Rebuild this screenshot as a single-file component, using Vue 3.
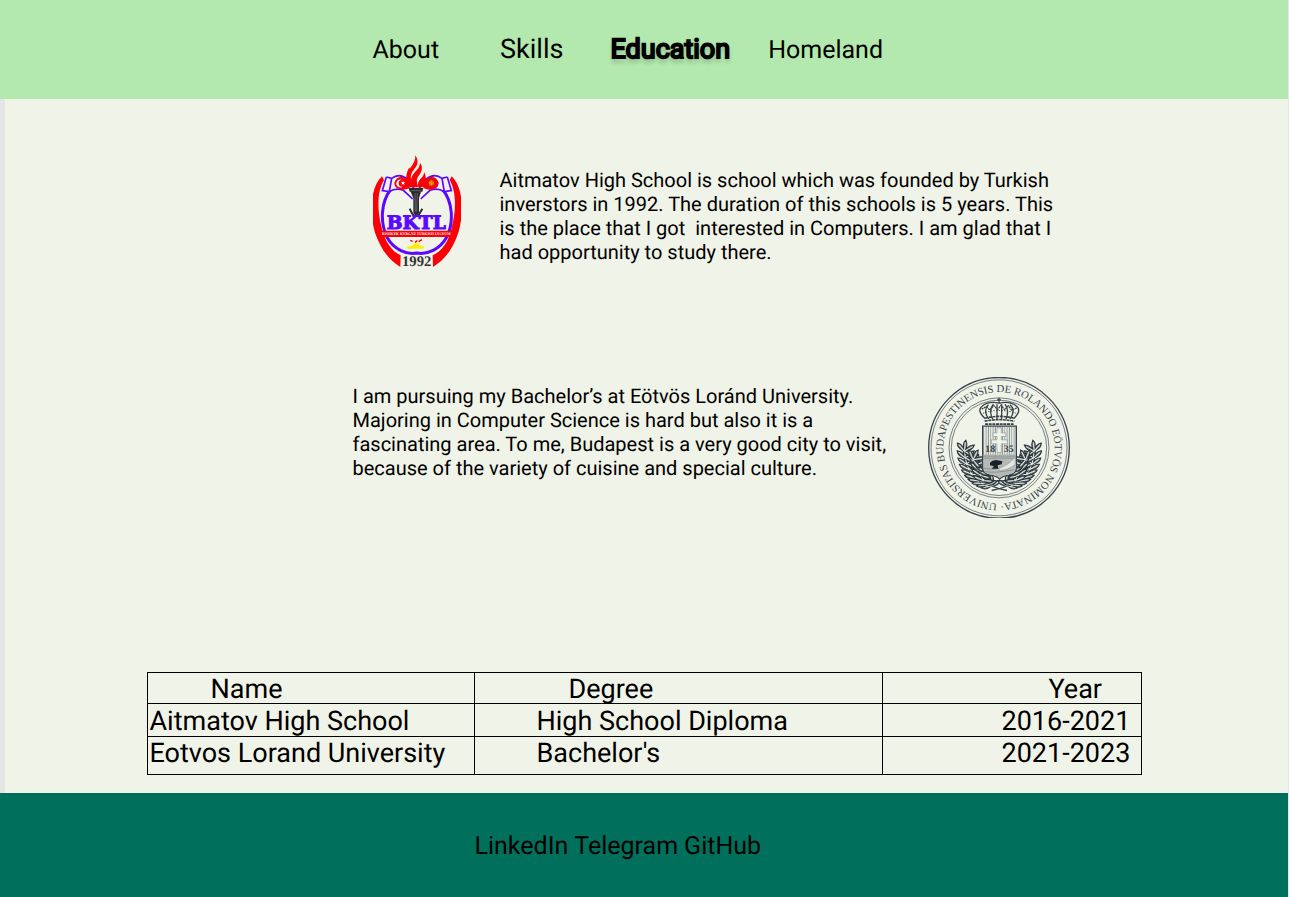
<script setup>
const sections = [
  { name: 'About', cls: 'about' },
  { name: 'Skills', cls: 'skills' },
  { name: 'Education', cls: 'education' },
  { name: 'Homeland', cls: 'homeland' },
]
const contacts = ['LinkedIn', 'Telegram', 'GitHub']
const leaves = []
for (let i = 0; i < 10; i++) {
  const t = i / 9
  leaves.push({ x: 216 - 82 * Math.sin(t * 1.5), y: 346 - 92 * t * t - 12 * t, a: 5 + t * 60 })
}
for (let i = 0; i < 5; i++) {
  const t = i / 4
  leaves.push({ x: 190 - 30 * t, y: 330 - 62 * t, a: 40 + t * 45 })
}
</script>

<template>
  <div class="page">
    <header class="top">
      <nav class="column nav" aria-label="Main">
        <a v-for="s in sections" :key="s.name" href="#" :class="s.cls">{{ s.name }}</a>
      </nav>
    </header>

    <main class="content">
      <section class="column school">
        <svg class="crest" viewBox="24 14 264 339" role="img" aria-label="BKTL 1992">
          <path d="M51 78C15 112 13 190 30 247C46 291 66 325 106 350L107 315C80 303 58 270 50 232C36 178 36 124 57 89Z" fill="#fb0007" />
          <path d="M260 78C296 112 297 190 280 247C265 291 244 325 204 350L203 315C231 303 253 270 260 232C274 178 274 124 254 89Z" fill="#fb0007" />
          <path d="M78 116C47 155 45 216 66 261C87 299 126 314 155 308C187 314 225 297 245 261C267 216 264 155 232 116" fill="none" stroke="#5a08ff" stroke-width="9" />
          <path d="M64 80L80 84Q103 66 128 87L147 115M64 80L52 121L73 124Q93 111 115 120L143 146M80 84L73 124M247 80L231 84Q208 66 182 87L162 115M247 80L259 121L238 124Q217 111 195 120L167 146M231 84L238 124" fill="#f4efff" stroke="#5a08ff" stroke-width="5" />
          <path d="M88 97Q94 78 112 80Q128 83 137 103L133 114Q113 122 98 114Q88 109 88 97ZM221 97Q215 78 197 80Q181 83 172 103L176 114Q196 122 211 114Q221 109 221 97Z" fill="#fb0007" />
          <path d="M110 88A12 12 0 1 0 113 109A10 10 0 1 1 110 88Z" fill="#fff" />
          <path d="M114 92L116 96L121 96L117 99L119 104L114 101L110 103L111 98L108 95L113 95Z" fill="#fff" />
          <circle cx="199" cy="98" r="10" fill="#ff5a08" stroke="#9b3a00" stroke-width="3" />
          <path d="M192 98H206M199 91V105" stroke="#ffb000" stroke-width="2" />
          <path d="M151 15C165 36 154 49 146 59C134 74 135 88 146 102L140 111H134Q119 91 125 71C131 53 152 42 151 15ZM166 38C176 55 168 67 160 78Q151 91 160 111H144C131 87 142 74 152 63Q163 53 166 38ZM132 52Q143 64 133 76Q126 90 136 104L139 111H133Q126 105 127 89Q121 71 132 52ZM178 66Q185 82 181 94Q179 104 172 111H160Q155 99 166 86Q177 77 178 66Z" fill="#fb0007" />
          <path d="M131 113H175L172 124H168L162 143V187L153 200L145 187V143L137 124H134Z" fill="#292b2d" />
          <path d="M139 121H168M150 128L151 184M157 128L155 184" stroke="#7f8184" stroke-width="2" />
          <path d="M134 175Q140 189 149 200M172 175Q164 189 157 200" fill="none" stroke="#292b2d" stroke-width="6" />
          <text x="154" y="237" class="crest-name">BKTL</text>
          <path d="M45 241H262L256 260H51Z" fill="#fb0007" />
          <text x="154" y="254" class="crest-line">BISHKEK KYRGYZ TURKISH LYCEUM</text>
          <path d="M125 291L145 284L152 276L158 280L166 278L161 287L179 287L174 295H148L130 297Z" fill="#fff000" />
          <path d="M136 270L143 273M150 276L157 271M161 274L171 268" fill="none" stroke="#fb0007" stroke-width="4" />
          <text x="155" y="347" class="crest-year">1992</text>
        </svg>
        <p>Aitmatov High School is school which was founded by Turkish inverstors in 1992. The duration of this schools is 5 years. This is the place that I got&nbsp; interested in Computers. I am glad that I had opportunity to study there.</p>
      </section>

      <section class="column university">
        <p>I am pursuing my Bachelor’s at Eötvös Loránd University. Majoring in Computer Science is hard but also it is a fascinating area. To me, Budapest is a very good city to visit, because of the variety of cuisine and special culture.</p>
        <svg class="seal" viewBox="25 20 426 422" role="img" aria-label="Eötvös Loránd University seal">
          <defs>
            <path id="seal-ring" d="M238 399A167 167 0 0 1 238 65A167 167 0 0 1 238 399" />
            <pattern id="seal-lines" width="7" height="7" patternUnits="userSpaceOnUse">
              <path d="M3 0V7" stroke="#667078" stroke-width="2" />
            </pattern>
          </defs>
          <g fill="none" stroke="#38434a">
            <circle cx="238" cy="232" r="211" stroke-width="4" />
            <circle cx="238" cy="232" r="204" stroke-width="2" />
            <circle cx="238" cy="232" r="150" stroke-width="2" />
            <circle cx="238" cy="232" r="143" stroke-width="2" />
          </g>
          <text class="seal-text"><textPath href="#seal-ring" startOffset="6">UNIVERSITAS BUDAPESTINENSIS DE ROLANDO EÖTVÖS NOMINATA·</textPath></text>
          <g fill="none" stroke="#38434a" stroke-width="4">
            <path d="M238 82V98M232 88H244M197 145Q170 120 187 107Q206 90 238 98Q271 90 291 107Q307 120 282 145M207 145Q189 120 206 103M219 146Q206 120 221 101M232 146V101M246 146V101M259 146Q270 118 256 101M271 145Q290 119 271 103" />
            <path d="M186 116L200 108L211 119L222 105L234 117L244 104L255 118L266 106L276 119L292 112" stroke-dasharray="6 2" />
            <path d="M190 128Q238 112 288 128" stroke-dasharray="4 4" stroke-width="3" />
            <path d="M197 143Q238 132 282 143M195 152Q238 143 284 152M196 161H283" stroke-dasharray="9 2" stroke-width="5" />
          </g>
          <g v-for="side in [1, -1]" :key="side" :transform="side === 1 ? '' : 'translate(478 0) scale(-1 1)'">
            <path d="M262 360Q205 348 175 323Q142 293 135 235" fill="none" stroke="#38434a" stroke-width="4" />
            <g v-for="(l, i) in leaves" :key="i" :transform="`translate(${l.x} ${l.y}) rotate(${l.a})`">
              <path d="M0 0Q-24 -2 -28 -18Q-7 -17 0 0ZM0 0Q-12 -22 -4 -35Q10 -20 0 0ZM0 0Q-16 16 -31 9Q-20 -5 0 0ZM0 0Q12 -20 26 -18Q20 0 0 0Z" fill="#6d777a" stroke="#273239" stroke-width="3" />
              <path d="M-23 -14L0 0L-2 -28M-25 7L0 0L20 -14" fill="none" stroke="#e4e8df" stroke-width="3" />
            </g>
          </g>
          <path d="M189 167H290V294Q288 310 267 314Q247 317 240 326Q233 317 212 314Q191 311 189 294Z" fill="#f0f3e8" />
          <path d="M189 167H290V294Q288 310 267 314Q247 317 240 326Q233 317 212 314Q191 311 189 294Z" fill="url(#seal-lines)" stroke="#38434a" stroke-width="4" />
          <path d="M232 172H245V187H258V198H245V208H263V220H245V246H232V220H215V208H232V198H220V187H232Z" fill="#f0f3e8" stroke="#8c9597" stroke-width="2" />
          <path d="M191 252H288V294Q286 310 266 312Q247 315 240 323Q233 315 212 312Q193 310 191 294Z" fill="#b5bab6" />
          <path d="M190 257H289M190 263H289M190 292Q218 303 286 282M194 303Q225 309 281 298" fill="none" stroke="#778083" stroke-width="2" />
          <path d="M211 277Q220 266 234 269L248 272L246 281L234 284L236 295H216L223 287L211 284Z" fill="#182128" />
          <path d="M238 293Q262 288 286 261V283Q266 299 240 300Z" fill="#e5e8df" stroke="#69737a" />
          <text x="212" y="243" class="seal-year">18</text>
          <text x="267" y="243" class="seal-year">35</text>
        </svg>
      </section>

      <table class="column degrees">
        <colgroup><col class="c-name"><col class="c-degree"><col class="c-year"></colgroup>
        <thead>
          <tr><th scope="col">Name</th><th scope="col">Degree</th><th scope="col">Year</th></tr>
        </thead>
        <tbody>
          <tr><td>Aitmatov High School</td><td>High School Diploma</td><td>2016-2021</td></tr>
          <tr><td>Eotvos Lorand University</td><td>Bachelor's</td><td>2021-2023</td></tr>
        </tbody>
      </table>
    </main>

    <footer class="bottom">
      <div class="column links">
        <a v-for="c in contacts" :key="c" href="#">{{ c }}</a>
      </div>
    </footer>
  </div>
</template>

<style>
body { margin: 0; background: #e5e5e5; }
</style>

<style scoped>
.page {
  min-height: 100vh;
  display: flex;
  flex-direction: column;
  font-family: Roboto, "Liberation Sans", sans-serif;
  text-rendering: geometricPrecision;
  color: #000;
}
.column { width: 100%; max-width: 995px; margin: 0 auto; box-sizing: border-box; }
a { color: inherit; text-decoration: none; }
p { margin: 0; font-size: 20px; line-height: 24px; }

.top { background: #b3e8ae; margin-right: 1px; padding: 32px 0 31px; }
.nav { display: flex; align-items: baseline; padding-left: 226px; font-size: 25px; line-height: 34px; }
.skills { margin-left: 61px; font-size: 27px; }
.education {
  margin-left: 47px;
  font-size: 27px;
  -webkit-text-stroke: 2px #000;
  text-shadow: 0 4px 4px rgba(0, 0, 0, 0.25);
}
.homeland { margin-left: 38px; }

.content {
  flex: 1;
  padding: 56px 0 18px;
  background: linear-gradient(90deg, #e5e5e5 5px, #f0f3e8 5px);
  margin-right: 1px;
}
.school { display: flex; align-items: flex-start; padding-left: 226px; gap: 39px; }
.school p { width: 570px; margin-top: 13px; }
.crest { width: 88px; height: 113px; flex: none; }
.crest-name { font: bold 56px "DejaVu Serif", serif; fill: #5a08ff; stroke: #5a08ff; stroke-width: 3px; text-anchor: middle; }
.crest-line { font: bold 11px "Liberation Serif", serif; fill: #fff; text-anchor: middle; }
.crest-year { font: bold 44px "Liberation Serif", serif; fill: #303236; text-anchor: middle; }

.university { display: flex; align-items: flex-start; padding-left: 206px; gap: 25px; margin-top: 109px; }
.university p { width: 550px; margin-top: 7px; }
.seal { width: 142px; height: 141px; flex: none; }
.seal-text { font: 32px "Liberation Serif", serif; fill: #38434a; }
.seal-year { font: bold 30px "Liberation Serif", serif; fill: #38434a; text-anchor: middle; }

.degrees {
  margin-top: 154px;
  border-collapse: collapse;
  table-layout: fixed;
  font-size: 27px;
  line-height: 28px;
}
.c-name { width: 327px; }
.c-degree { width: 408px; }
th, td { border: 1px solid #000; padding: 2px 0 0 2px; height: 28px; text-align: left; font-weight: 400; vertical-align: top; white-space: nowrap; }
tbody tr:first-child td { height: 29px; padding-top: 3px; }
tbody tr:last-child td { height: 35px; }
th:first-child { padding-left: 63px; }
th:nth-child(2) { padding-left: 94px; }
th:nth-child(3) { padding-left: 166px; }
td:nth-child(2) { padding-left: 62px; }
td:nth-child(3) { padding-left: 119px; }

.bottom { background: #00705c; margin-right: 1px; padding: 39px 0 35px; }
.links { display: flex; gap: 6px; padding-left: 328px; font-size: 25px; line-height: 30px; }
</style>
